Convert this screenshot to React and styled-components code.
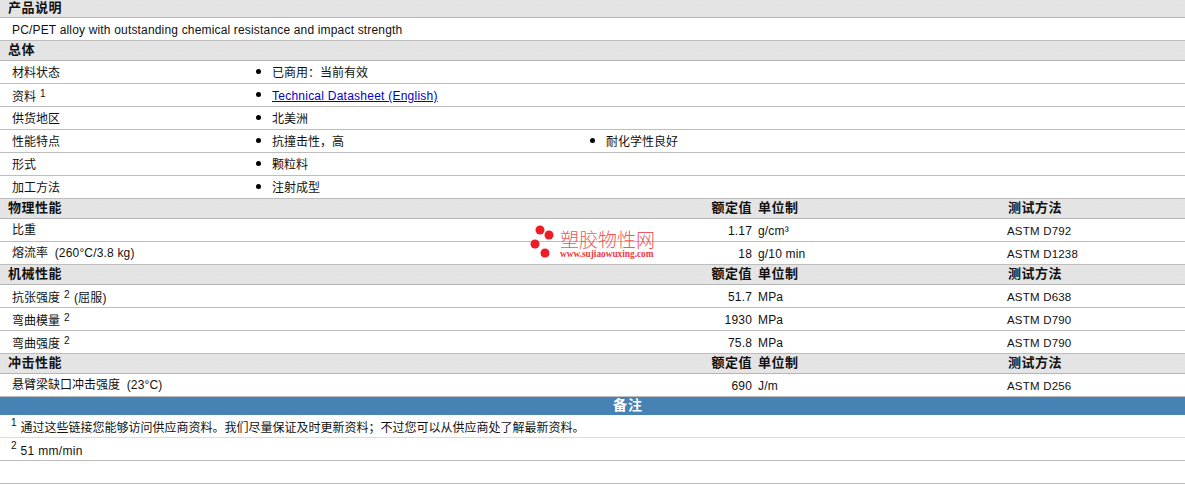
import React from "react"
import styled, { createGlobalStyle } from "styled-components"

const GlobalStyle = createGlobalStyle`
  html, body {
    margin: 0;
    padding: 0;
    background: #fff;
    font-family: "Liberation Sans", Arial, "Noto Sans CJK SC", sans-serif;
    font-size: 12px;
    color: #111;
  }
`

const Page = styled.div`
  position: relative;
  width: 1185px;
  height: 485px;
  overflow: hidden;
`

const Heading = styled.div`
  display: grid;
  grid-template-columns: 692px 60px 249px 1fr;
  align-items: center;
  box-sizing: border-box;
  height: ${(props) => props.$height || 20}px;
  padding-bottom: ${(props) => props.$lift || 2}px;
  background-color: #e4e4e4;
  background-image: radial-gradient(#e9e9e9 0.6px, transparent 0.7px);
  background-size: 5px 5px;
  border-bottom: 1px solid #b5b5b5;
  font-weight: bold;
  font-size: 13px;
  line-height: 14px;
  letter-spacing: 0.5px;
  color: #111;
`

const HeadName = styled.span`
  padding-left: 8px;
  white-space: nowrap;
`

const HeadValue = styled.span`
  justify-self: end;
  white-space: nowrap;
`

const HeadUnit = styled.span`
  padding-left: 6px;
  white-space: nowrap;
`

const HeadTest = styled.span`
  padding-left: 7px;
  white-space: nowrap;
`

const Row = styled.div`
  display: grid;
  grid-template-columns: ${(props) => props.$columns};
  align-items: center;
  box-sizing: border-box;
  height: 23px;
  padding-bottom: 2px;
  border-bottom: 1px solid #bdbdbd;
`

const Label = styled.div`
  padding-left: 12px;
  padding-top: ${(props) => (props.$drop ? 2 : 0)}px;
  padding-bottom: ${(props) => (props.$rise ? 2 : 0)}px;
  white-space: nowrap;
`

const Bullet = styled.div`
  display: flex;
  align-items: center;
  white-space: nowrap;

  &::before {
    content: "";
    width: 5px;
    height: 5px;
    margin-left: -3px;
    margin-right: 11px;
    border-radius: 50%;
    background: #000;
  }
`

const Latin = styled.span`
  display: inline-block;
  letter-spacing: ${(props) => props.$spacing || 0.17}px;
  transform: translateY(2px);
`

const Extra = styled.span`
  letter-spacing: 0.17px;
`

const Value = styled(Latin)`
  display: block;
  text-align: right;
`

const Unit = styled(Latin)`
  display: block;
  padding-left: 6px;
`

const TestMethod = styled(Latin)`
  display: block;
  font-size: 11.5px;
  letter-spacing: 0.2px;
  padding-left: 6px;
`

const Sup = styled.sup`
  font-size: 10px;
  line-height: 0;
  vertical-align: 4px;
  margin: 0 1px 0 4px;
`

const Banner = styled.div`
  box-sizing: border-box;
  height: 18px;
  background: #4682b4;
  color: #fff;
  font-weight: bold;
  font-size: 14px;
  letter-spacing: 1px;
  line-height: 16px;
  text-align: center;
  padding-left: 71px;
`

const Note = styled.div`
  display: flex;
  align-items: center;
  box-sizing: border-box;
  height: 23px;
  padding-left: 11px;
  border-bottom: 1px solid ${(props) => props.$line};
  white-space: nowrap;

  ${Sup} {
    margin: 0 4px 0 0;
    position: relative;
    top: -3px;
  }
`

const Watermark = styled.div`
  position: absolute;
  left: 530px;
  top: 225px;
  display: flex;
  gap: 6px;
  color: #ee3a43;
`

const WatermarkText = styled.div`
  display: flex;
  flex-direction: column;
  padding-top: 4px;
`

const WatermarkTitle = styled.span`
  font-size: 19px;
  line-height: 20px;
  font-family: "Noto Sans CJK SC", sans-serif;
  font-weight: 300;
  opacity: 0.85;
`

const WatermarkUrl = styled.span`
  font-family: "Liberation Serif", serif;
  font-size: 9.3px;
  line-height: 10px;
  font-weight: bold;
`

const DataLink = styled.a`
  color: #0000cc;
  text-decoration: underline;
`

const generalColumns = "259px 334px 1fr"
const dataColumns = "692px 60px 249px 1fr"

const general = [
  { label: "材料状态", values: ["已商用：当前有效"] },
  { label: "资料", sup: "1", values: [<Latin key="link" $spacing={0.24}><DataLink href="#">Technical Datasheet (English)</DataLink></Latin>] },
  { label: "供货地区", values: ["北美洲"] },
  { label: "性能特点", values: ["抗撞击性，高", "耐化学性良好"] },
  { label: "形式", values: ["颗粒料"] },
  { label: "加工方法", values: ["注射成型"] },
]

const sections = [
  {
    title: "物理性能",
    rows: [
      { label: "比重", value: "1.17", unit: "g/cm³", test: "ASTM D792" },
      { label: "熔流率", extra: "(260°C/3.8 kg)", value: "18", unit: "g/10 min", test: "ASTM D1238" },
    ],
  },
  {
    title: "机械性能",
    rows: [
      { label: "抗张强度", sup: "2", extra: "(屈服)", value: "51.7", unit: "MPa", test: "ASTM D638" },
      { label: "弯曲模量", sup: "2", value: "1930", unit: "MPa", test: "ASTM D790" },
      { label: "弯曲强度", sup: "2", value: "75.8", unit: "MPa", test: "ASTM D790" },
    ],
  },
  {
    title: "冲击性能",
    rows: [
      { label: "悬臂梁缺口冲击强度", extra: "(23°C)", value: "690", unit: "J/m", test: "ASTM D256" },
    ],
  },
]

function DataLabel({ row }) {
  return (
    <Label $drop={!!row.sup} $rise={!row.sup}>
      {row.label}
      {row.sup && <Sup>{row.sup}</Sup>}
      {row.extra && (row.sup ? " " : "\u00a0\u00a0")}
      {row.extra && <Extra>{row.extra}</Extra>}
    </Label>
  )
}

export default function App() {
  return (
    <Page>
      <GlobalStyle />
      <Heading $height={18} $lift={1}><HeadName>产品说明</HeadName></Heading>
      <Row $columns="1fr">
        <Label><Latin>PC/PET alloy with outstanding chemical resistance and impact strength</Latin></Label>
      </Row>
      <Heading><HeadName>总体</HeadName></Heading>
      {general.map((row) => (
        <Row $columns={generalColumns} key={row.label}>
          <Label $drop={!!row.sup}>{row.label}{row.sup && <Sup>{row.sup}</Sup>}</Label>
          {row.values.map((value, i) => (
            <Bullet key={i}>{value}</Bullet>
          ))}
        </Row>
      ))}
      {sections.map((section) => (
        <React.Fragment key={section.title}>
          <Heading>
            <HeadName>{section.title}</HeadName>
            <HeadValue>额定值</HeadValue>
            <HeadUnit>单位制</HeadUnit>
            <HeadTest>测试方法</HeadTest>
          </Heading>
          {section.rows.map((row) => (
            <Row $columns={dataColumns} key={row.label}>
              <DataLabel row={row} />
              <Value>{row.value}</Value>
              <Unit>{row.unit}</Unit>
              <TestMethod>{row.test}</TestMethod>
            </Row>
          ))}
        </React.Fragment>
      ))}
      <Banner>备注</Banner>
      <Note $line="#dddddd"><Sup>1</Sup>通过这些链接您能够访问供应商资料。我们尽量保证及时更新资料；不过您可以从供应商处了解最新资料。</Note>
      <Note $line="#bdbdbd"><Sup>2</Sup><Latin $spacing={0.32}>51 mm/min</Latin></Note>
      <Note $line="#bdbdbd" />
      <Watermark>
        <svg width="24" height="34" viewBox="0 0 24 34">
          <circle cx="10" cy="5" r="4.5" fill="#ee1c25" />
          <circle cx="19" cy="10" r="4.5" fill="#ee1c25" />
          <circle cx="5" cy="19" r="4.5" fill="#ee1c25" />
          <circle cx="15" cy="28" r="4.5" fill="#ee1c25" />
        </svg>
        <WatermarkText>
          <WatermarkTitle>塑胶物性网</WatermarkTitle>
          <WatermarkUrl>www.sujiaowuxing.com</WatermarkUrl>
        </WatermarkText>
      </Watermark>
    </Page>
  )
}
